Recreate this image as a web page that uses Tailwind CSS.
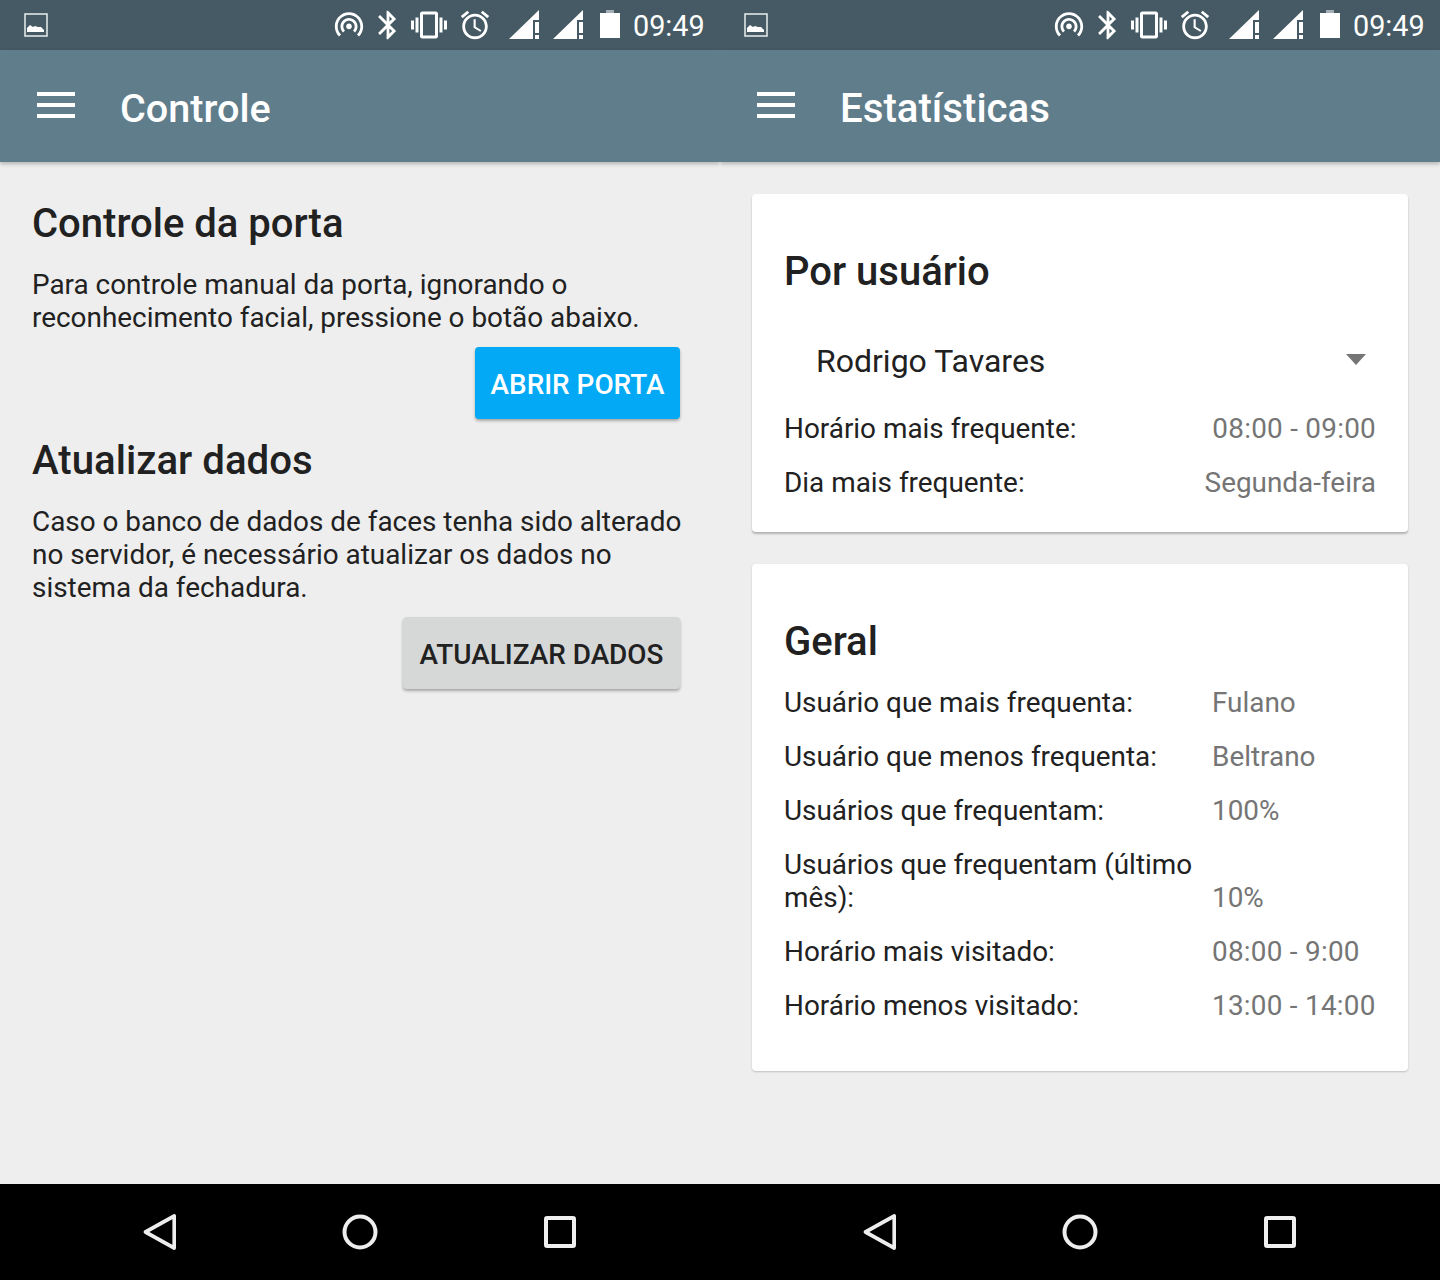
<!DOCTYPE html>
<html lang="en">

<head>
    <meta charset="UTF-8" />
    <title>Controle / Estatísticas</title>
    <script src="https://cdn.jsdelivr.net/npm/@tailwindcss/browser@4"></script>
</head>

<body class="w-[1440px] h-[1280px] flex bg-[#eeeeee] overflow-hidden font-['Roboto',sans-serif] text-[#212121] text-[27.9px] leading-[33px]">

    <!-- Left screen: Controle -->
    <div class="w-[720px] h-[1280px] flex flex-col overflow-hidden">
        <div class="h-[50px] shrink-0 bg-[#455a64] flex items-center text-white">
            <svg class="ml-[24px]" width="24" height="24" viewBox="0 0 24 24">
                <rect x="1" y="1" width="22" height="22" fill="none" stroke="#dfe6e8" stroke-width="1.6" />
                <path d="M3 19v-4l3-3 3 2 2-1 3 1 3 0 3 3v2z" fill="#fff" />
            </svg>
            <div class="ml-auto mr-[16px] flex items-center h-full">
                <svg width="34" height="34" viewBox="0 0 24 24" fill="#fff"><path d="M12 11c-1.1 0-2 .9-2 2 0 .55.23 1.05.59 1.41.36.36.86.59 1.41.59s1.05-.23 1.41-.59c.36-.36.59-.86.59-1.41 0-1.1-.9-2-2-2zm6 2c0-3.31-2.69-6-6-6s-6 2.69-6 6c0 1.65.68 3.15 1.76 4.24l1.42-1.42C8.45 15.1 8 14.11 8 13c0-2.21 1.79-4 4-4s4 1.79 4 4c0 1.11-.45 2.1-1.18 2.82l1.42 1.42C17.32 16.15 18 14.65 18 13zM12 3C6.48 3 2 7.48 2 13c0 2.76 1.12 5.26 2.93 7.07l1.42-1.42C4.9 17.21 4 15.21 4 13c0-4.42 3.58-8 8-8s8 3.58 8 8c0 2.21-.9 4.21-2.35 5.65l1.42 1.42C20.88 18.26 22 15.76 22 13c0-5.52-4.48-10-10-10z" /></svg>
                <svg class="ml-[5px]" width="34" height="34" viewBox="0 0 24 24" fill="#fff"><path d="M17.71 7.71L12 2h-1v7.59L6.41 5 5 6.41 10.59 12 5 17.59 6.41 19 11 14.41V22h1l5.71-5.71-4.3-4.29 4.3-4.29zM13 5.83l1.88 1.88L13 9.59V5.83zm1.88 10.46L13 18.17v-3.76l1.88 1.88z" /></svg>
                <svg class="ml-[6px]" width="36" height="36" viewBox="0 0 24 24" fill="#fff"><path d="M0 15h2V9H0v6zm3 2h2V7H3v10zm19-8v6h2V9h-2zm-3 8h2V7h-2v10zM16.5 3h-9C6.67 3 6 3.67 6 4.5v15c0 .83.67 1.5 1.5 1.5h9c.83 0 1.5-.67 1.5-1.5v-15c0-.83-.67-1.5-1.5-1.5zM16 19H8V5h8v14z" /></svg>
                <svg class="ml-[11px]" width="34" height="34" viewBox="0 0 24 24" fill="#fff"><path d="M22 5.72l-4.6-3.86-1.29 1.53 4.6 3.86L22 5.72zM7.88 3.39L6.6 1.86 2 5.71l1.29 1.53 4.59-3.85zM12.5 8H11v6l4.75 2.85.75-1.23-4-2.37V8zM12 4c-4.97 0-9 4.03-9 9s4.03 9 9 9c4.97 0 9-4.03 9-9s-4.03-9-9-9zm0 16c-3.87 0-7-3.13-7-7s3.13-7 7-7c3.86 0 7 3.13 7 7s-3.13 7-7 7z" /></svg>
                <svg class="ml-[17px]" width="32" height="50" viewBox="0 0 32 50" fill="#fff"><path d="M0 39L30 10v10h-6v19z" /><path d="M26 22h4v11h-4zM26 35h4v4h-4z" /></svg>
                <svg class="ml-[12px]" width="32" height="50" viewBox="0 0 32 50" fill="#fff"><path d="M0 39L30 10v10h-6v19z" /><path d="M26 22h4v11h-4zM26 35h4v4h-4z" /></svg>
                <svg class="ml-[15px]" width="20" height="50" viewBox="0 0 20 50"><path d="M6 10h8v3H6z" fill="#a3afb4" /><path d="M0 13h20v25H0z" fill="#fff" /></svg>
                <span class="ml-[13px] mt-[2px] w-[71px] text-[28.8px] leading-[50px]">09:49</span>
            </div>
        </div>

        <header class="h-[112px] shrink-0 bg-[#607d8b] flex items-center text-white shadow-[0_2px_4px_rgba(0,0,0,0.25)]">
            <svg class="ml-[37px] mb-[2px]" width="38" height="26" viewBox="0 0 38 26" fill="#fff"><path d="M0 0h38v4H0zM0 11h38v4H0zM0 22h38v4H0z" /></svg>
            <h1 class="ml-[45px] mt-[4px] text-[39.6px] leading-[47px] font-medium">Controle</h1>
        </header>

        <main class="flex-1 pl-[32px] pr-[32px] pt-[38px]">
            <h2 class="text-[40px] leading-[47px] font-medium">Controle da porta</h2>
            <p class="mt-[21px]">Para controle manual da porta, ignorando o reconhecimento facial, pressione o botão abaixo.</p>
            <div class="mt-[13px] mr-[8px] flex justify-end">
                <button class="w-[205px] h-[72px] pt-[2px] rounded-[4px] bg-[#03a9f4] text-white font-medium shadow-[0_2px_3px_rgba(0,0,0,0.3)]">ABRIR PORTA</button>
            </div>
            <h2 class="mt-[18px] text-[40.2px] leading-[47px] font-medium">Atualizar dados</h2>
            <p class="mt-[21px]">Caso o banco de dados de faces tenha sido alterado no servidor, é necessário atualizar os dados no sistema da fechadura.</p>
            <div class="mt-[13px] mr-[8px] flex justify-end">
                <button class="w-[277px] h-[72px] pt-[2px] rounded-[4px] bg-[#d6d7d7] font-medium shadow-[0_2px_3px_rgba(0,0,0,0.3)]">ATUALIZAR DADOS</button>
            </div>
        </main>

        <nav class="h-[96px] shrink-0 bg-black flex items-center justify-center gap-[152px]">
            <svg width="48" height="48" viewBox="0 0 48 48" fill="none" stroke="#eeeeee" stroke-width="4" stroke-linejoin="round"><path d="M38 8v32L6 24z" transform="translate(4 0) scale(0.9 1) translate(0 0)" /></svg>
            <svg width="48" height="48" viewBox="0 0 48 48" fill="none" stroke="#eeeeee" stroke-width="4"><circle cx="24" cy="24" r="15.5" /></svg>
            <svg width="48" height="48" viewBox="0 0 48 48" fill="none" stroke="#eeeeee" stroke-width="4" stroke-linejoin="round"><rect x="10" y="10" width="28" height="28" rx="1" /></svg>
        </nav>
    </div>

    <!-- Right screen: Estatísticas -->
    <div class="w-[720px] h-[1280px] flex flex-col overflow-hidden">
        <div class="h-[50px] shrink-0 bg-[#455a64] flex items-center text-white">
            <svg class="ml-[24px]" width="24" height="24" viewBox="0 0 24 24">
                <rect x="1" y="1" width="22" height="22" fill="none" stroke="#dfe6e8" stroke-width="1.6" />
                <path d="M3 19v-4l3-3 3 2 2-1 3 1 3 0 3 3v2z" fill="#fff" />
            </svg>
            <div class="ml-auto mr-[16px] flex items-center h-full">
                <svg width="34" height="34" viewBox="0 0 24 24" fill="#fff"><path d="M12 11c-1.1 0-2 .9-2 2 0 .55.23 1.05.59 1.41.36.36.86.59 1.41.59s1.05-.23 1.41-.59c.36-.36.59-.86.59-1.41 0-1.1-.9-2-2-2zm6 2c0-3.31-2.69-6-6-6s-6 2.69-6 6c0 1.65.68 3.15 1.76 4.24l1.42-1.42C8.45 15.1 8 14.11 8 13c0-2.21 1.79-4 4-4s4 1.79 4 4c0 1.11-.45 2.1-1.18 2.82l1.42 1.42C17.32 16.15 18 14.65 18 13zM12 3C6.48 3 2 7.48 2 13c0 2.76 1.12 5.26 2.93 7.07l1.42-1.42C4.9 17.21 4 15.21 4 13c0-4.42 3.58-8 8-8s8 3.58 8 8c0 2.21-.9 4.21-2.35 5.65l1.42 1.42C20.88 18.26 22 15.76 22 13c0-5.52-4.48-10-10-10z" /></svg>
                <svg class="ml-[5px]" width="34" height="34" viewBox="0 0 24 24" fill="#fff"><path d="M17.71 7.71L12 2h-1v7.59L6.41 5 5 6.41 10.59 12 5 17.59 6.41 19 11 14.41V22h1l5.71-5.71-4.3-4.29 4.3-4.29zM13 5.83l1.88 1.88L13 9.59V5.83zm1.88 10.46L13 18.17v-3.76l1.88 1.88z" /></svg>
                <svg class="ml-[6px]" width="36" height="36" viewBox="0 0 24 24" fill="#fff"><path d="M0 15h2V9H0v6zm3 2h2V7H3v10zm19-8v6h2V9h-2zm-3 8h2V7h-2v10zM16.5 3h-9C6.67 3 6 3.67 6 4.5v15c0 .83.67 1.5 1.5 1.5h9c.83 0 1.5-.67 1.5-1.5v-15c0-.83-.67-1.5-1.5-1.5zM16 19H8V5h8v14z" /></svg>
                <svg class="ml-[11px]" width="34" height="34" viewBox="0 0 24 24" fill="#fff"><path d="M22 5.72l-4.6-3.86-1.29 1.53 4.6 3.86L22 5.72zM7.88 3.39L6.6 1.86 2 5.71l1.29 1.53 4.59-3.85zM12.5 8H11v6l4.75 2.85.75-1.23-4-2.37V8zM12 4c-4.97 0-9 4.03-9 9s4.03 9 9 9c4.97 0 9-4.03 9-9s-4.03-9-9-9zm0 16c-3.87 0-7-3.13-7-7s3.13-7 7-7c3.86 0 7 3.13 7 7s-3.13 7-7 7z" /></svg>
                <svg class="ml-[17px]" width="32" height="50" viewBox="0 0 32 50" fill="#fff"><path d="M0 39L30 10v10h-6v19z" /><path d="M26 22h4v11h-4zM26 35h4v4h-4z" /></svg>
                <svg class="ml-[12px]" width="32" height="50" viewBox="0 0 32 50" fill="#fff"><path d="M0 39L30 10v10h-6v19z" /><path d="M26 22h4v11h-4zM26 35h4v4h-4z" /></svg>
                <svg class="ml-[15px]" width="20" height="50" viewBox="0 0 20 50"><path d="M6 10h8v3H6z" fill="#a3afb4" /><path d="M0 13h20v25H0z" fill="#fff" /></svg>
                <span class="ml-[13px] mt-[2px] w-[71px] text-[28.8px] leading-[50px]">09:49</span>
            </div>
        </div>

        <header class="h-[112px] shrink-0 bg-[#607d8b] flex items-center text-white shadow-[0_2px_4px_rgba(0,0,0,0.25)]">
            <svg class="ml-[37px] mb-[2px]" width="38" height="26" viewBox="0 0 38 26" fill="#fff"><path d="M0 0h38v4H0zM0 11h38v4H0zM0 22h38v4H0z" /></svg>
            <h1 class="ml-[45px] mt-[4px] text-[40.2px] leading-[47px] font-medium">Estatísticas</h1>
        </header>

        <main class="flex-1 px-[32px] pt-[32px] flex flex-col gap-[32px]">
            <section class="h-[338px] rounded-[4px] bg-white px-[32px] pt-[54px] shadow-[0_2px_2px_rgba(0,0,0,0.25)]">
                <h2 class="text-[40px] leading-[47px] font-medium">Por usuário</h2>
                <div class="mt-[34px] h-[64px] flex items-center pl-[32px] pr-[10px] text-[32px] leading-[38px]">
                    <span>Rodrigo Tavares</span>
                    <svg class="ml-auto mb-[4px]" width="20" height="11" viewBox="0 0 20 11" fill="#757575"><path d="M0 0h20L10 11z" /></svg>
                </div>
                <div class="mt-[19px] flex justify-between">
                    <span>Horário mais frequente:</span>
                    <span class="text-[#757575] tracking-[0.25px]">08:00 - 09:00</span>
                </div>
                <div class="mt-[21px] flex justify-between">
                    <span>Dia mais frequente:</span>
                    <span class="text-[#757575]">Segunda-feira</span>
                </div>
            </section>

            <section class="h-[507px] rounded-[4px] bg-white px-[32px] pt-[54px] shadow-[0_1px_2px_rgba(0,0,0,0.2)]">
                <h2 class="text-[40px] leading-[47px] font-medium">Geral</h2>
                <div class="mt-[21px] grid grid-cols-[428px_1fr] gap-y-[21px] items-end">
                    <span>Usuário que mais frequenta:</span>
                    <span class="text-[#757575]">Fulano</span>
                    <span>Usuário que menos frequenta:</span>
                    <span class="text-[#757575]">Beltrano</span>
                    <span>Usuários que frequentam:</span>
                    <span class="text-[#757575]">100%</span>
                    <span>Usuários que frequentam (último mês):</span>
                    <span class="text-[#757575]">10%</span>
                    <span>Horário mais visitado:</span>
                    <span class="text-[#757575] tracking-[0.25px]">08:00 - 9:00</span>
                    <span>Horário menos visitado:</span>
                    <span class="text-[#757575] tracking-[0.25px]">13:00 - 14:00</span>
                </div>
            </section>
        </main>

        <nav class="h-[96px] shrink-0 bg-black flex items-center justify-center gap-[152px]">
            <svg width="48" height="48" viewBox="0 0 48 48" fill="none" stroke="#eeeeee" stroke-width="4" stroke-linejoin="round"><path d="M38 8v32L6 24z" transform="translate(4 0) scale(0.9 1) translate(0 0)" /></svg>
            <svg width="48" height="48" viewBox="0 0 48 48" fill="none" stroke="#eeeeee" stroke-width="4"><circle cx="24" cy="24" r="15.5" /></svg>
            <svg width="48" height="48" viewBox="0 0 48 48" fill="none" stroke="#eeeeee" stroke-width="4" stroke-linejoin="round"><rect x="10" y="10" width="28" height="28" rx="1" /></svg>
        </nav>
    </div>

</body>

</html>
